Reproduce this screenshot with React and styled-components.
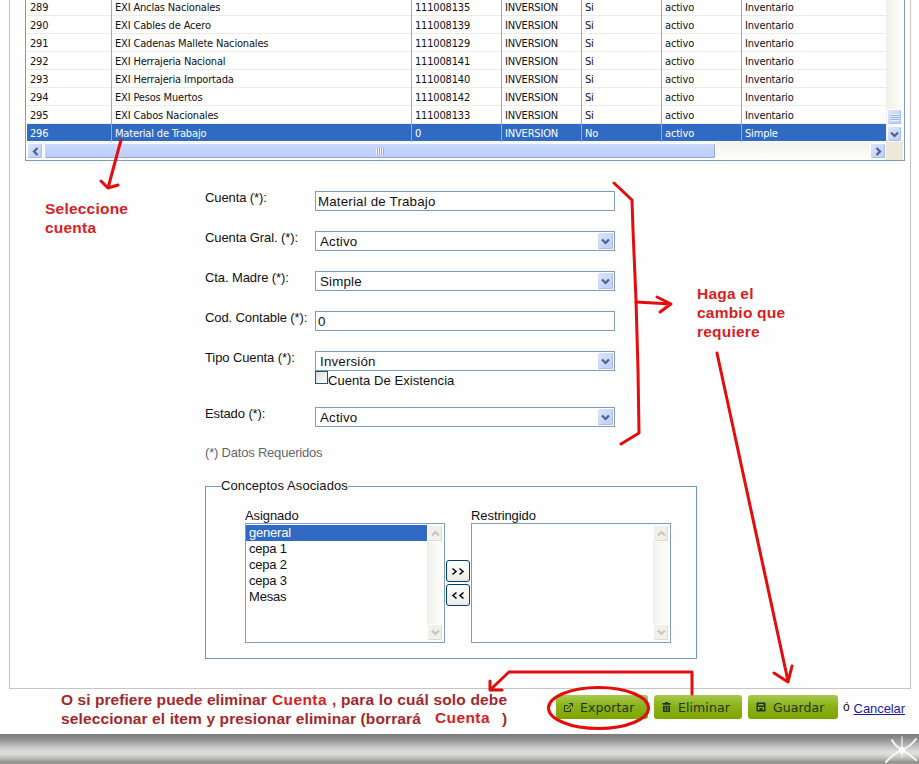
import styled, { createGlobalStyle, css } from "styled-components";

const GlobalStyle = createGlobalStyle`
  * {
    box-sizing: border-box;
  }

  body {
    margin: 0;
    background: #fefefe;
    color: #111;
    font-family: "Liberation Sans", Arial, sans-serif;
    overflow: hidden;
  }
`;

const Page = styled.div`
  position: relative;
  width: 919px;
  height: 764px;
  overflow: hidden;
  display: flex;
  flex-direction: column;
`;

const Panel = styled.main`
  margin-left: 9px;
  width: 902px;
  height: 689px;
  flex: none;
  padding-left: 15px;
  border: 1px solid #c6c6c6;
  border-top: none;
`;

const Grid = styled.section`
  width: 880px;
  height: 161px;
  overflow: hidden;
  border: 1px solid #7f9db9;
  border-top: none;
  padding: 0 1px;
  display: grid;
  grid-template-columns: 859px 1fr;
  grid-template-rows: 142px 18px;
`;

const Rows = styled.div`
  margin-top: -2px;
  font-family: "DejaVu Sans Condensed", "DejaVu Sans", Tahoma, sans-serif;
  font-stretch: condensed;
  font-size: 11px;
  letter-spacing: -0.17px;
`;

const Row = styled.div`
  display: grid;
  grid-template-columns: 85px 300px 90px 80px 80px 80px 1fr;
  height: 18px;
  border-bottom: 1px solid #ecebe4;
  background: ${(props) => (props.$selected ? "#316ac5" : "#fff")};
  color: ${(props) => (props.$selected ? "#fff" : "#111")};
  border-bottom-color: ${(props) => (props.$selected ? "#fff" : "#ecebe4")};
`;

const Cell = styled.span`
  padding: 1px 0 0 3px;
  line-height: 17px;
  white-space: nowrap;
  border-right: 1px solid #aca899;

  &:last-child {
    border-right: none;
  }
`;

const VTrack = styled.div`
  display: flex;
  flex-direction: column;
  justify-content: flex-end;
  align-items: center;
  gap: 1px;
  background: linear-gradient(90deg, #f0f0e8, #fefefb);
`;

const HTrack = styled.div`
  display: flex;
  align-items: center;
  background: linear-gradient(#f3f3ec, #fefefb);
`;

const ScrollButton = styled.span`
  width: ${(props) => props.$w || 15}px;
  height: ${(props) => props.$h || 16}px;
  flex: none;
  display: flex;
  align-items: center;
  justify-content: center;
  border: 1px solid #fff;
  border-radius: 2px;
  box-shadow: inset -1px -1px 0 #a9bdf0;
  background: linear-gradient(135deg, #dbe5fe, #b9cbf8);
  color: #4d6185;

  ${(props) =>
    props.$disabled &&
    css`
      background: #f1f0ea;
      box-shadow: inset -1px -1px 0 #dddbd0;
      color: #c9c7ba;
    `}
`;

const HThumb = styled.span`
  width: 672px;
  height: 16px;
  margin-left: 1px;
  display: flex;
  align-items: center;
  justify-content: center;
  border: 1px solid #fff;
  border-radius: 2px;
  box-shadow: inset -1px -1px 0 #8ea7e0;
  background: linear-gradient(#cbd8fc, #bccdfa);
`;

const Grip = styled.span`
  width: 8px;
  height: 7px;
  background: repeating-linear-gradient(
    ${(props) => (props.$vertical ? "180deg" : "90deg")},
    #eef4fe 0 1px,
    #8cb0f8 1px 2px
  );
`;

const Spacer = styled.span`
  flex: 1;
`;

const Corner = styled.div`
  background: #ece9d8;
`;

const Form = styled.form`
  margin: 30px 0 0 180px;
  width: 492px;
`;

const Field = styled.div`
  display: grid;
  grid-template-columns: 110px 300px;
  height: ${(props) => props.$h || 40}px;
  align-items: start;
`;

const Label = styled.label`
  font-size: 13px;
  letter-spacing: ${(props) => props.$ls || -0.1}px;
  line-height: 14px;
  white-space: nowrap;
  color: ${(props) => props.$color || "#111"};
`;

const Control = styled.div`
  height: 20px;
  border: 1px solid #7f9db9;
  background: #fff;
  padding-left: ${(props) => (props.$select ? 4 : 2)}px;
  display: flex;
  justify-content: space-between;
  align-items: center;
  font-size: 13.33px;
  letter-spacing: 0.18px;
  line-height: 18px;
`;

const ControlText = styled.span`
  padding-top: 2px;
`;

const Check = styled.div`
  display: flex;
  height: 16px;
  align-items: flex-start;

  i {
    width: 13px;
    height: 13px;
    border: 1px solid #1c5180;
    background: linear-gradient(135deg, #dcdcd7, #fff);
  }

  label {
    margin-top: 3px;
  }
`;

const Required = styled.div`
  display: flex;
  height: 15px;
`;

const Concepts = styled.fieldset`
  margin: 18px 0 0;
  padding: 0 0 0 39px;
  width: 492px;
  height: 180px;
  border: 1px solid #6f9ab8;

  legend {
    margin-left: -24px;
    padding: 0;
    height: 14px;
    font-size: 13px;
    line-height: 14px;
    letter-spacing: 0.1px;
  }
`;

const Lists = styled.div`
  display: flex;
  margin-top: 16px;
`;

const ListTitle = styled.div`
  font-size: 13px;
  letter-spacing: -0.08px;
  line-height: 14px;
`;

const ListBox = styled.div`
  width: 200px;
  height: 120px;
  border: 1px solid #7f9db9;
  background: #fff;
  padding: 1px 0;
  display: grid;
  grid-template-columns: 1fr 17px;
`;

const Option = styled.div`
  height: 16px;
  padding-left: 3px;
  font-size: 13px;
  line-height: 16px;
  letter-spacing: -0.2px;
  background: ${(props) => (props.$selected ? "#316ac5" : "transparent")};
  color: ${(props) => (props.$selected ? "#fff" : "#111")};
`;

const ListTrack = styled.div`
  display: flex;
  flex-direction: column;
  justify-content: space-between;
  background: linear-gradient(90deg, #f1f1ec, #fefefe);
`;

const MoveButtons = styled.div`
  width: 26px;
  padding: 51px 1px 0;
  display: flex;
  flex-direction: column;
  gap: 2px;
`;

const MoveButton = styled.button`
  width: 24px;
  height: 22px;
  padding: 0;
  border: 1px solid #003c74;
  border-radius: 3px;
  background: linear-gradient(#fff, #ecebe5);
  display: flex;
  align-items: center;
  justify-content: center;
`;

const Actions = styled.div`
  flex: none;
  height: 45px;
  padding: 6px 14px 0 0;
  display: flex;
  justify-content: flex-end;
  align-items: flex-start;
`;

const ActionButton = styled.button`
  width: ${(props) => props.$w}px;
  height: 24px;
  margin-right: ${(props) => props.$gap || 6}px;
  padding: 0 0 0 8px;
  display: flex;
  align-items: center;
  gap: 7px;
  border: none;
  border-radius: 3px;
  background: linear-gradient(#a9c84e, #8ab31a 45%, #7ea600);
  color: #26331a;
  font-family: "DejaVu Sans", Verdana, sans-serif;
  font-size: 12.5px;
  letter-spacing: 0.1px;
  white-space: nowrap;

  svg {
    flex: none;
  }
`;

const Or = styled.span`
  font-size: 12px;
  line-height: 24px;
  margin-right: 4px;
`;

const Cancel = styled.a`
  margin-top: 6px;
  font-size: 13px;
  line-height: 15px;
  letter-spacing: -0.08px;
  color: #1a1aa8;
  text-decoration: underline;
`;

const Footer = styled.footer`
  height: 30px;
  flex: none;
  display: flex;
  justify-content: flex-end;
  background: linear-gradient(
    #787878,
    #8d8d8d 15%,
    #b4b4b4 35%,
    #d9dad9 56%,
    #dededd 66%,
    #b9b9b8 82%,
    #8c8c88 96%,
    #a9a9a4
  );
`;

const Marks = styled.svg`
  position: absolute;
  left: 0;
  top: 0;
  fill: none;
  stroke: #e30d0d;
  stroke-width: 3;
  stroke-linejoin: round;
  stroke-linecap: round;
`;

const Note = styled.div`
  position: absolute;
  left: ${(props) => props.$x}px;
  top: ${(props) => props.$y}px;
  font-size: 15.5px;
  font-weight: bold;
  line-height: 19px;
  letter-spacing: ${(props) => props.$ls || 0.22}px;
  color: ${(props) => props.$color || "#d81e22"};
  white-space: pre;
`;

const rows = [
  ["289", "EXI Anclas Nacionales", "111008135", "INVERSION", "Si", "activo", "Inventario"],
  ["290", "EXI Cables de Acero", "111008139", "INVERSION", "Si", "activo", "Inventario"],
  ["291", "EXI Cadenas Mallete Nacionales", "111008129", "INVERSION", "Si", "activo", "Inventario"],
  ["292", "EXI Herrajeria Nacional", "111008141", "INVERSION", "Si", "activo", "Inventario"],
  ["293", "EXI Herrajeria Importada", "111008140", "INVERSION", "Si", "activo", "Inventario"],
  ["294", "EXI Pesos Muertos", "111008142", "INVERSION", "Si", "activo", "Inventario"],
  ["295", "EXI Cabos Nacionales", "111008133", "INVERSION", "Si", "activo", "Inventario"],
  ["296", "Material de Trabajo", "0", "INVERSION", "No", "activo", "Simple"],
];

const angles = { down: 0, left: 90, up: 180, right: 270 };

const Chevron = ({ dir = "down" }) => (
  <svg width="9" height="9" viewBox="0 0 9 9">
    <path
      d="M1 2.5 4.5 6 8 2.5"
      fill="none"
      stroke="currentColor"
      strokeWidth="2.2"
      transform={`rotate(${angles[dir]} 4.5 4.5)`}
    />
  </svg>
);

const Input = ({ value }) => (
  <Control>
    <ControlText>{value}</ControlText>
  </Control>
);

const Select = ({ value }) => (
  <Control $select>
    <ControlText>{value}</ControlText>
    <ScrollButton $w={17} $h={18}>
      <Chevron />
    </ScrollButton>
  </Control>
);

const List = ({ title, items }) => (
  <div>
    <ListTitle>{title}</ListTitle>
    <ListBox>
      <div>
        {items.map((item, i) => (
          <Option key={item} $selected={i === 0}>
            {item}
          </Option>
        ))}
      </div>
      <ListTrack>
        <ScrollButton $disabled $w={16} $h={17}>
          <Chevron dir="up" />
        </ScrollButton>
        <ScrollButton $disabled $w={16} $h={17}>
          <Chevron />
        </ScrollButton>
      </ListTrack>
    </ListBox>
  </div>
);

const MoveArrows = ({ back }) => (
  <svg width="14" height="9" viewBox="0 0 14 9">
    <path
      d={back ? "M5.500 1.500 2 4.500 5.500 7.500M12.500 1.500 9 4.500 12.500 7.500" : "M1.500 1.500 5 4.500 1.500 7.500M8.500 1.500 12 4.500 8.500 7.500"}
      fill="none"
      stroke="#000"
      strokeWidth="1.5"
    />
  </svg>
);

const ExportIcon = () => (
  <svg width="9" height="9" viewBox="0 0 9 9" fill="none" stroke="#26331a">
    <path d="M3.5 2.5H.5v6h6v-3M3 6 8 1M5 .5h3.5V4" />
  </svg>
);

const TrashIcon = () => (
  <svg width="9" height="10" viewBox="0 0 10 11" fill="#26331a">
    <path d="M3.5 0h3v1H9.500v2H.5V1h3zM1 4h8v7H1zM3 5v5h1V5zm3 0v5h1V5z" fillRule="evenodd" />
  </svg>
);

const SaveIcon = () => (
  <svg width="10" height="10" viewBox="0 0 10 10" fill="#26331a">
    <path d="M1 .5h8l.5.5v8l-.5.5H1L.5 9V1zM2.500 2v1.500h5V2zM2 5v3h1.500V6h3v2H8V5z" fillRule="evenodd" />
  </svg>
);

const App = () => {
  return (
    <Page>
      <GlobalStyle />
      <Panel>
        <Grid>
          <Rows>
            {rows.map((row) => (
              <Row key={row[0]} $selected={row[0] === "296"}>
                {row.map((value, i) => (
                  <Cell key={i}>{value}</Cell>
                ))}
              </Row>
            ))}
          </Rows>
          <VTrack>
            <ScrollButton $h={16}>
              <Grip $vertical />
            </ScrollButton>
            <ScrollButton $h={16}>
              <Chevron />
            </ScrollButton>
          </VTrack>
          <HTrack>
            <ScrollButton $w={16}>
              <Chevron dir="left" />
            </ScrollButton>
            <HThumb>
              <Grip />
            </HThumb>
            <Spacer />
            <ScrollButton $w={16}>
              <Chevron dir="right" />
            </ScrollButton>
          </HTrack>
          <Corner />
        </Grid>

        <Form>
          <Field>
            <Label>Cuenta (*):</Label>
            <Input value="Material de Trabajo" />
          </Field>
          <Field>
            <Label>Cuenta Gral. (*):</Label>
            <Select value="Activo" />
          </Field>
          <Field>
            <Label>Cta. Madre (*):</Label>
            <Select value="Simple" />
          </Field>
          <Field>
            <Label>Cod. Contable (*):</Label>
            <Input value="0" />
          </Field>
          <Field $h={56}>
            <Label>Tipo Cuenta (*):</Label>
            <div>
              <Select value="Inversión" />
              <Check>
                <i />
                <Label $ls={0.07}>Cuenta De Existencia</Label>
              </Check>
            </div>
          </Field>
          <Field $h={39}>
            <Label>Estado (*):</Label>
            <Select value="Activo" />
          </Field>
          <Required>
            <Label $color="#666" $ls={-0.2}>
              (*) Datos Requeridos
            </Label>
          </Required>
          <Concepts>
            <legend>Conceptos Asociados</legend>
            <Lists>
              <List title="Asignado" items={["general", "cepa 1", "cepa 2", "cepa 3", "Mesas"]} />
              <MoveButtons>
                <MoveButton type="button">
                  <MoveArrows />
                </MoveButton>
                <MoveButton type="button">
                  <MoveArrows back />
                </MoveButton>
              </MoveButtons>
              <List title="Restringido" items={[]} />
            </Lists>
          </Concepts>
        </Form>
      </Panel>

      <Actions>
        <ActionButton $w={92}>
          <ExportIcon />
          Exportar
        </ActionButton>
        <ActionButton $w={88}>
          <TrashIcon />
          Eliminar
        </ActionButton>
        <ActionButton $w={90} $gap={5}>
          <SaveIcon />
          Guardar
        </ActionButton>
        <Or>ó</Or>
        <Cancel>Cancelar</Cancel>
      </Actions>

      <Footer>
        <svg width="40" height="30" viewBox="0 0 40 30" fill="none" stroke="#f4f4f4" strokeLinecap="round">
          <path d="M7 28Q15 19 23 16T37 5M13 6Q17 13 23 16T37 26" strokeWidth="2" />
          <path d="M23 3v20" strokeWidth="1.5" opacity=".8" />
          <circle cx="23" cy="16" r="3" fill="#fff" stroke="none" />
        </svg>
      </Footer>

      <Marks width="919" height="764">
        <path d="M121 140 108 188M101 181 108 188 118 185" />
        <path d="M614 183 632 200 633 230 636 300 638 370 639 433 621 444" />
        <path d="M636 302 671 304M657 297 671 304 660 312" />
        <path d="M717 353 788 681M774 673 788 682 792 666" />
        <path d="M692 694V672H509L490 690M490 681V690L502 690" />
        <ellipse cx="598.500" cy="708" rx="50" ry="20.500" />
      </Marks>

      <Note $x={45} $y={199}>{"Seleccione\ncuenta"}</Note>
      <Note $x={697} $y={284}>{"Haga el\ncambio que\nrequiere"}</Note>
      <Note $x={61} $y={690} $ls={0.06} $color="#a3282c">O si prefiere puede eliminar</Note>
      <Note $x={272} $y={690} $ls={0.4}>Cuenta</Note>
      <Note $x={332} $y={690} $ls={0.16} $color="#a3282c">, para lo cuál solo debe</Note>
      <Note $x={61} $y={709} $ls={0.12} $color="#a3282c">seleccionar el item y presionar eliminar (borrará</Note>
      <Note $x={435} $y={708} $ls={0.4}>Cuenta</Note>
      <Note $x={502} $y={709} $color="#a3282c">)</Note>
    </Page>
  );
};

export default App;
